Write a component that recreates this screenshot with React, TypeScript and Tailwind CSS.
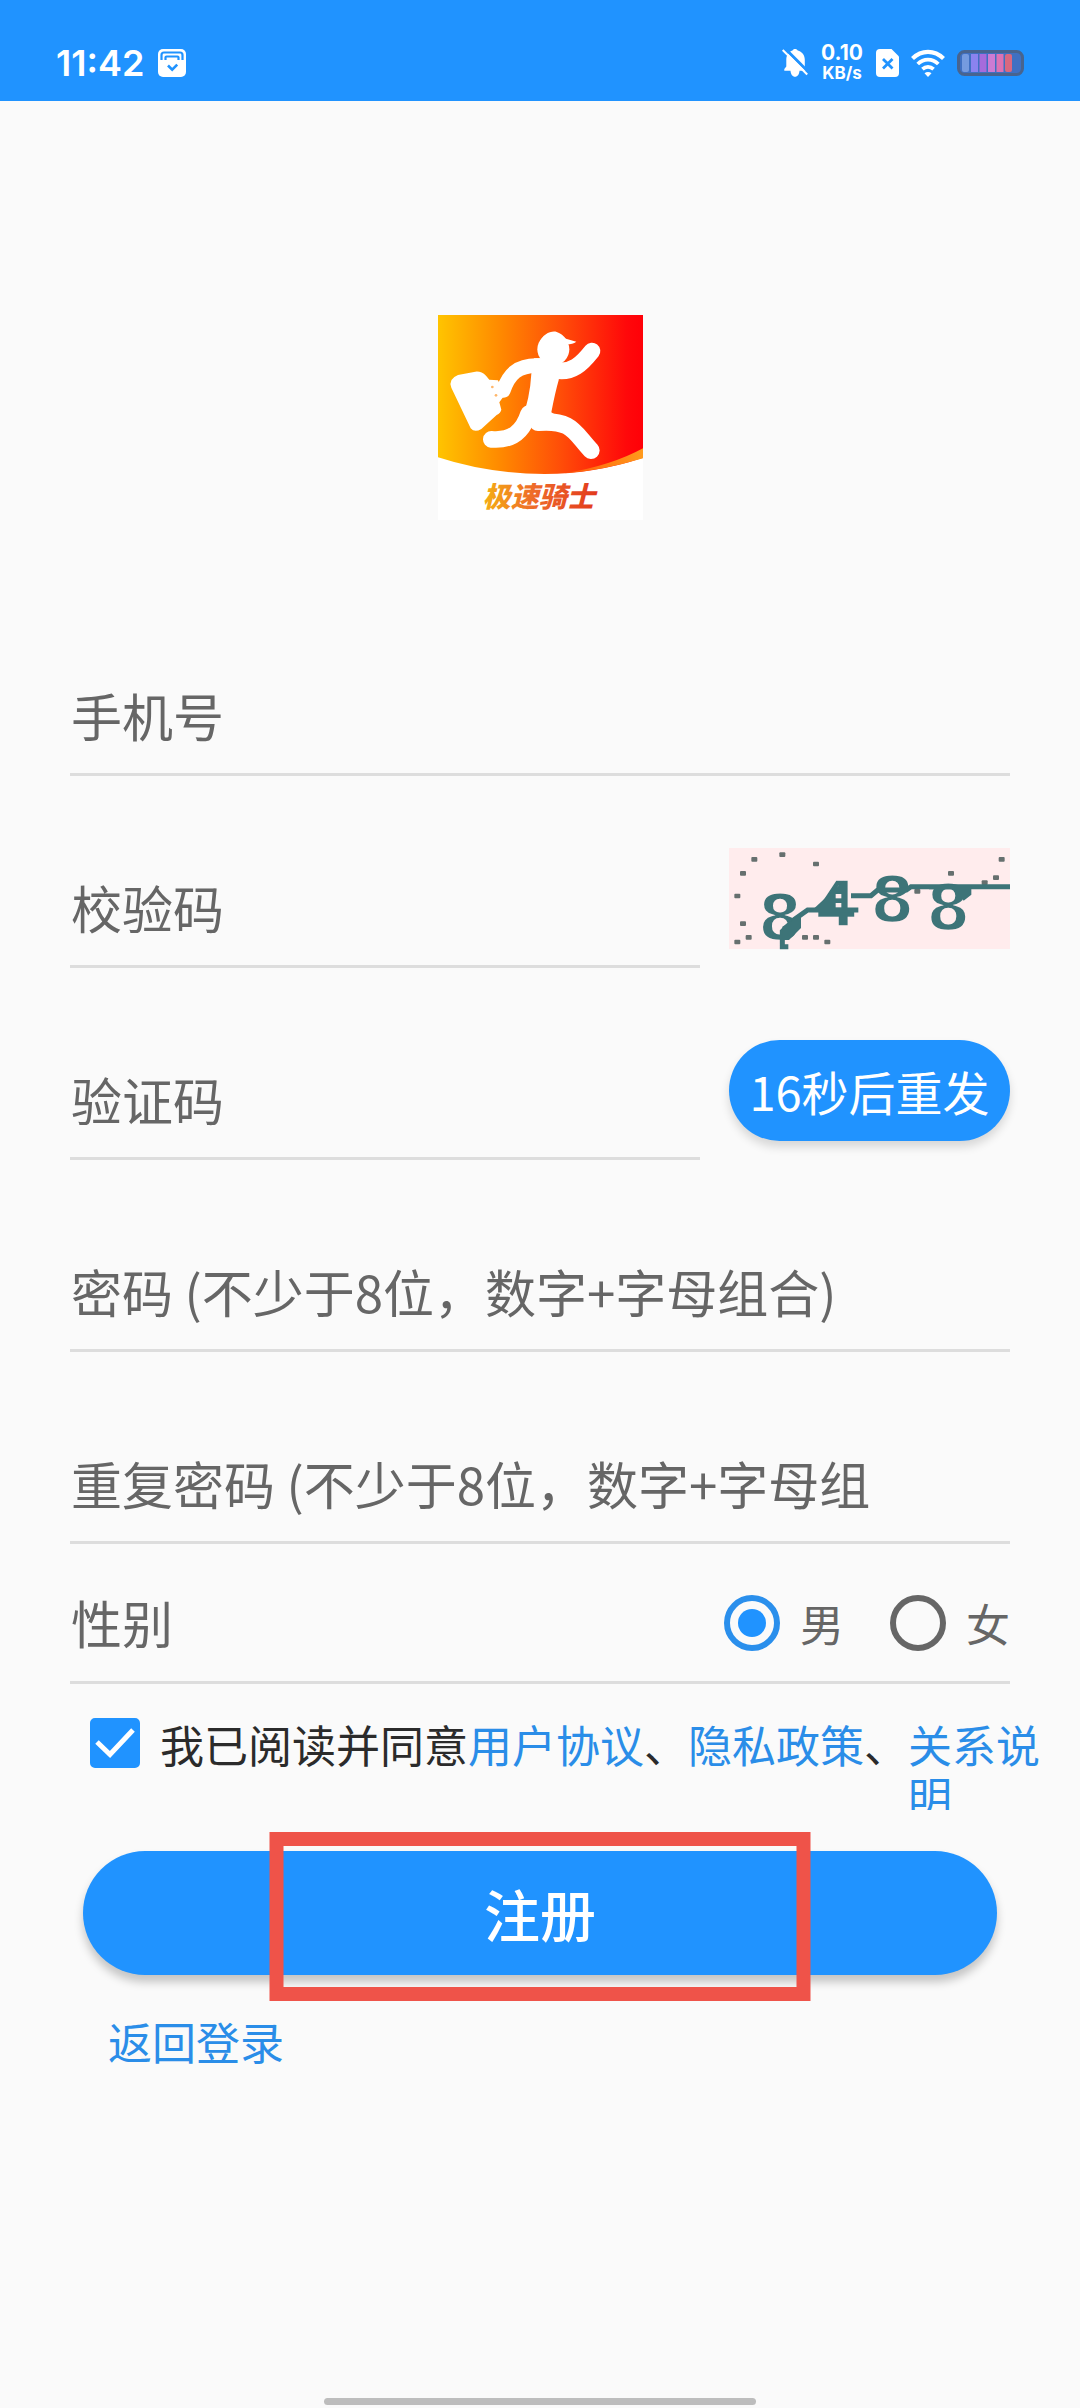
import React, { useState } from "react";

const inputClass =
  "block h-28 w-full border-b-[3px] border-[#dddddd] bg-transparent px-px pb-2 text-[51px] text-[#333333] outline-none placeholder:text-[#666666] placeholder:opacity-100";

function StatusBar() {
  return (
    <header className="flex h-[101px] items-end justify-between bg-[#2093ff] px-14 pb-4 font-['Inter','Noto_Sans_CJK_SC',sans-serif] text-white">
      <div className="flex h-11 items-center gap-3.5">
        <span className="text-[36px] leading-none font-semibold">11:42</span>
        <svg className="size-7" viewBox="0 0 28 28" aria-hidden="true">
          <rect width="28" height="28" rx="5" fill="white" />
          <path d="M3.500 11V6a2.500 2.500 0 0 1 2.500-2.500h16A2.500 2.500 0 0 1 24.500 6v5" fill="none" stroke="#2093ff" strokeWidth="2.200" />
          <path d="M7.500 11V8.500a1 1 0 0 1 1-1h11a1 1 0 0 1 1 1V11" fill="none" stroke="#2093ff" strokeWidth="2.200" />
          <path d="m10 16.500 4.200 4.200 5-5" fill="none" stroke="#2093ff" strokeWidth="2.600" />
        </svg>
      </div>
      <div className="flex h-11 items-center gap-3">
        <svg className="h-[30px] w-[26px]" viewBox="0 0 26 30" aria-hidden="true">
          <path
            d="M13 1c1.4 0 2.3.6 2.7 1.6 4.300 1.100 7.100 4.700 7.100 9.200v7l2.200 4H2.300v-1.700l2-2.500v-6.800c0-4.500 2.500-8.100 6.200-9.200C10.900 1.600 11.700 1 13 1Z"
            fill="white"
          />
          <path d="M8.500 22h9c0 4-2 6.800-4.500 6.800S8.500 26 8.500 22Z" fill="white" />
          <path d="M2.500 0 27 24.500" stroke="#2093ff" strokeWidth="3" />
          <path d="M.7 2 25.200 26.500" stroke="white" strokeWidth="2" />
        </svg>
        <span className="flex w-11 flex-col items-center font-bold">
          <span className="text-[21px] leading-5">0.10</span>
          <span className="text-[17px] leading-5">KB/s</span>
        </span>
        <svg className="h-7 w-[23px]" viewBox="0 0 23 28" aria-hidden="true">
          <path d="M4 0h11.500L23 7.500V24a4 4 0 0 1-4 4H4a4 4 0 0 1-4-4V4a4 4 0 0 1 4-4Z" fill="white" />
          <path d="m7 10 9.500 9.500M16.500 10 7 19.500" stroke="#2093ff" strokeWidth="2.800" />
        </svg>
        <svg className="h-7 w-[34px]" viewBox="0 0 34 28" fill="none" stroke="white" aria-hidden="true">
          <path d="M1.500 9.500C10.500.7 23.500.7 32.500 9.500" strokeWidth="4.200" />
          <path d="M6.700 15c6-5.800 14.600-5.800 20.600 0" strokeWidth="3.800" />
          <path d="M11.400 20.200c3.400-3 7.800-3 11.200 0" strokeWidth="3.800" />
          <path d="M13.500 24.300c2-1.700 5-1.700 7 0L17 28Z" fill="white" stroke="none" />
        </svg>
        <svg className="h-[26px] w-[67px]" viewBox="0 0 67 26" aria-hidden="true">
          <rect x="1.500" y="1.500" width="64" height="23" rx="6" fill="#3f70c2" stroke="#48648f" strokeWidth="3" />
          <rect x="5" y="4" width="7" height="18" rx="2" fill="#759bdf" />
          <rect x="14" y="4" width="7" height="18" fill="#8a83ef" />
          <rect x="22.500" y="4" width="7" height="18" fill="#a66bdc" />
          <rect x="31" y="4" width="7" height="18" fill="#cc7bd3" />
          <rect x="39.500" y="4" width="7" height="18" fill="#dc72b4" />
          <rect x="48" y="4" width="7" height="18" rx="2" fill="#d96880" />
        </svg>
      </div>
    </header>
  );
}

function Logo() {
  return (
    <svg className="size-[205px]" viewBox="0 0 615 615" role="img" aria-label="极速骑士">
      <defs>
        <linearGradient id="logo-bg" x1="0" y1="0" x2="1" y2="0">
          <stop offset="0" stopColor="#ffc400" />
          <stop offset="0.3" stopColor="#ff8a00" />
          <stop offset="0.6" stopColor="#ff4d08" />
          <stop offset="0.92" stopColor="#ff080a" />
          <stop offset="1" stopColor="#ff0008" />
        </linearGradient>
        <linearGradient id="logo-text" x1="0" y1="0" x2="1" y2="0">
          <stop offset="0" stopColor="#f5b012" />
          <stop offset="0.45" stopColor="#ee6a2a" />
          <stop offset="1" stopColor="#e23a1c" />
        </linearGradient>
        <linearGradient id="logo-wave" x1="0" y1="0" x2="1" y2="0">
          <stop offset="0" stopColor="#ff5a08" />
          <stop offset="1" stopColor="#ff9a1c" />
        </linearGradient>
      </defs>
      <rect width="615" height="615" fill="white" />
      <path d="M0 0H615V428Q470 476 320 477Q150 476 0 427Z" fill="url(#logo-bg)" />
      <path d="M380 475Q520 452 615 400V430Q490 468 380 475Z" fill="url(#logo-wave)" />
      <g fill="none" stroke="white" strokeLinecap="round" strokeLinejoin="round">
        <path d="M352 166C402 176 432 146 462 108" strokeWidth="50" />
        <path d="M306 152C238 148 212 180 196 226" strokeWidth="44" />
        <path d="M272 296C254 352 220 378 160 373" strokeWidth="50" />
        <path d="M300 322C404 314 408 352 459 406" strokeWidth="52" />
      </g>
      <path d="M288 130H372L362 196Q352 230 340 292L352 300L300 332Q262 330 250 318Q276 250 280 176Z" fill="white" />
      <circle cx="346" cy="103" r="48" fill="white" />
      <path d="M304 86C312 56 342 46 356 51C372 56 376 64 384 71L415 80Q404 88 386 88L310 100Z" fill="white" />
      <path
        d="M60 180L112 170Q130 168 144 182L154 194L180 196L200 240L184 262L190 284Q188 294 176 300L130 342Q110 354 98 340L40 218Q30 192 60 180Z"
        fill="white"
      />
      <g fill="#ffb66a">
        <circle cx="163" cy="216" r="4" />
        <circle cx="174" cy="241" r="4" />
      </g>
      <text
        x="134"
        y="576"
        fontSize="84"
        fontWeight="900"
        fontStyle="italic"
        fontFamily="'Noto Sans CJK SC', sans-serif"
        fill="url(#logo-text)"
      >
        极速骑士
      </text>
    </svg>
  );
}

const specks = [
  [76, 34], [160, 20], [261, 48], [42, 76], [25, 144], [42, 227], [59, 268], [25, 282],
  [228, 268], [261, 268], [295, 282], [565, 130], [666, 76], [767, 104], [801, 89], [818, 34],
];

function Captcha() {
  return (
    <svg className="block h-auto w-full overflow-visible" viewBox="0 0 843 303" role="img" aria-label="8488">
      <rect width="843" height="303" fill="#ffeced" />
      <g
        fill="#3d7478"
        stroke="#ffeced"
        strokeWidth="7"
        fontFamily="'DejaVu Sans', sans-serif"
        fontSize="190"
        fontWeight="700"
        textAnchor="middle"
      >
        <text x="153" y="275">8</text>
        <text x="322" y="236">4</text>
        <text x="490" y="221">8</text>
        <text x="658" y="246">8</text>
      </g>
      {specks.map(([x, y]) => (
        <rect key={`${x}-${y}`} x={x - 9} y={y - 7} width="18" height="14" rx="3" fill="#66706f" />
      ))}
      <g fill="none" stroke="#3d7478" strokeWidth="15">
        <path d="M178 296H160V250L196 214L236 186H388" />
        <path d="M366 143H426L446 126H532L546 116H843" />
      </g>
      <path d="M250 186L345 98V186Z" fill="#3d7478" />
      <path d="M160 236L216 200V240L180 276H160Z" fill="#3d7478" />
      <path d="M600 112H727V140L704 158L680 124H600Z" fill="#3d7478" />
      <g fill="#ffeced">
        <rect x="320" y="138" width="17" height="13" />
        <rect x="320" y="165" width="17" height="13" />
      </g>
    </svg>
  );
}

function GenderOption({
  label,
  checked,
  onSelect,
}: {
  label: string;
  checked: boolean;
  onSelect: () => void;
}) {
  return (
    <label className="flex items-center gap-5 text-[44px] leading-none text-[#666666]">
      <input
        type="radio"
        name="gender"
        checked={checked}
        onChange={onSelect}
        className="size-14 appearance-none rounded-full border-[6px] border-[#666666] bg-clip-content p-2 checked:border-[#2a8fec] checked:bg-[#2093ff]"
      />
      {label}
    </label>
  );
}

export default function App() {
  const [gender, setGender] = useState("男");
  const [agreed, setAgreed] = useState(true);

  return (
    <div className="flex min-h-screen flex-col bg-[#fafafa] font-['Noto_Sans_CJK_SC',sans-serif]">
      <StatusBar />
      <main className="flex flex-col">
        <div className="mt-[214px] flex justify-center">
          <Logo />
        </div>

        <form className="flex flex-col" onSubmit={(e) => e.preventDefault()}>
          <div className="mt-36 flex flex-col gap-20 px-[70px]">
            <input className={inputClass} type="tel" placeholder="手机号" aria-label="手机号" />
            <div className="flex h-28 items-end gap-[29px]">
              <div className="min-w-0 flex-1">
                <input className={inputClass} type="text" placeholder="校验码" aria-label="校验码" />
              </div>
              <button type="button" className="mb-[19px] w-[281px]" aria-label="刷新校验码">
                <Captcha />
              </button>
            </div>
            <div className="flex h-28 items-end gap-[29px]">
              <div className="min-w-0 flex-1">
                <input className={inputClass} type="text" placeholder="验证码" aria-label="验证码" />
              </div>
              <button
                type="button"
                className="mb-[19px] h-[101px] w-[281px] rounded-full bg-[#2093ff] text-[47px] leading-none whitespace-nowrap text-white shadow-[0_6px_10px_rgba(0,0,0,0.14)]"
              >
                16秒后重发
              </button>
            </div>
            <input
              className={inputClass}
              type="password"
              placeholder="密码 (不少于8位，数字+字母组合)"
              aria-label="密码"
            />
            <input
              className={inputClass}
              type="password"
              placeholder="重复密码 (不少于8位，数字+字母组"
              aria-label="重复密码"
            />
          </div>

          <div
            role="radiogroup"
            aria-labelledby="gender-label"
            className="mx-[70px] flex h-[140px] items-center justify-between border-b-[3px] border-[#dddddd] pt-5"
          >
            <span id="gender-label" className="px-px text-[51px] leading-none text-[#666666]">
              性别
            </span>
            <div className="flex gap-[46px]">
              <GenderOption label="男" checked={gender === "男"} onSelect={() => setGender("男")} />
              <GenderOption label="女" checked={gender === "女"} onSelect={() => setGender("女")} />
            </div>
          </div>

          <div className="mt-[34px] flex items-start pr-5 pl-[90px] text-[44px] leading-[52px] text-[#2a8de8]">
            <label className="flex shrink-0 items-start gap-5 text-[#2b2b2b]">
              <span className="relative size-[50px]">
                <input
                  type="checkbox"
                  checked={agreed}
                  onChange={() => setAgreed(!agreed)}
                  className="peer block size-[50px] appearance-none rounded-[5px] border-[5px] border-[#666666] checked:border-[#2093ff] checked:bg-[#2093ff]"
                />
                <svg
                  className="pointer-events-none absolute inset-0 hidden peer-checked:block"
                  viewBox="0 0 50 50"
                  fill="none"
                  stroke="white"
                  strokeWidth="5"
                  aria-hidden="true"
                >
                  <path d="m7 24 13 12.500L43 12" />
                </svg>
              </span>
              <span className="whitespace-nowrap">我已阅读并同意</span>
            </label>
            <a href="#terms" className="shrink-0">用户协议</a>
            <span className="shrink-0 text-[#2b2b2b]">、</span>
            <a href="#privacy" className="shrink-0">隐私政策</a>
            <span className="shrink-0 text-[#2b2b2b]">、</span>
            <a href="#relation" className="block h-[92px] min-w-0 flex-1 overflow-hidden">关系说明</a>
          </div>

          <div className="relative mx-[83px] mt-[41px]">
            <button
              type="submit"
              className="h-[124px] w-full rounded-full bg-[#2093ff] text-[56px] leading-none font-medium text-white shadow-[0_7px_10px_rgba(0,0,0,0.22)]"
            >
              注册
            </button>
            <div className="pointer-events-none absolute -top-[19px] -bottom-[26px] left-1/2 w-[541px] -translate-x-1/2 border-[14px] border-[#ef5349]" />
          </div>
        </form>

        <a href="#login" className="mt-10 ml-[108px] self-start text-[44px] leading-[52px] text-[#2a8de8]">
          返回登录
        </a>
      </main>
      <div className="mx-auto mt-auto mb-[3px] h-[7px] w-2/5 rounded-full bg-[#bdbdbd]" />
    </div>
  );
}
